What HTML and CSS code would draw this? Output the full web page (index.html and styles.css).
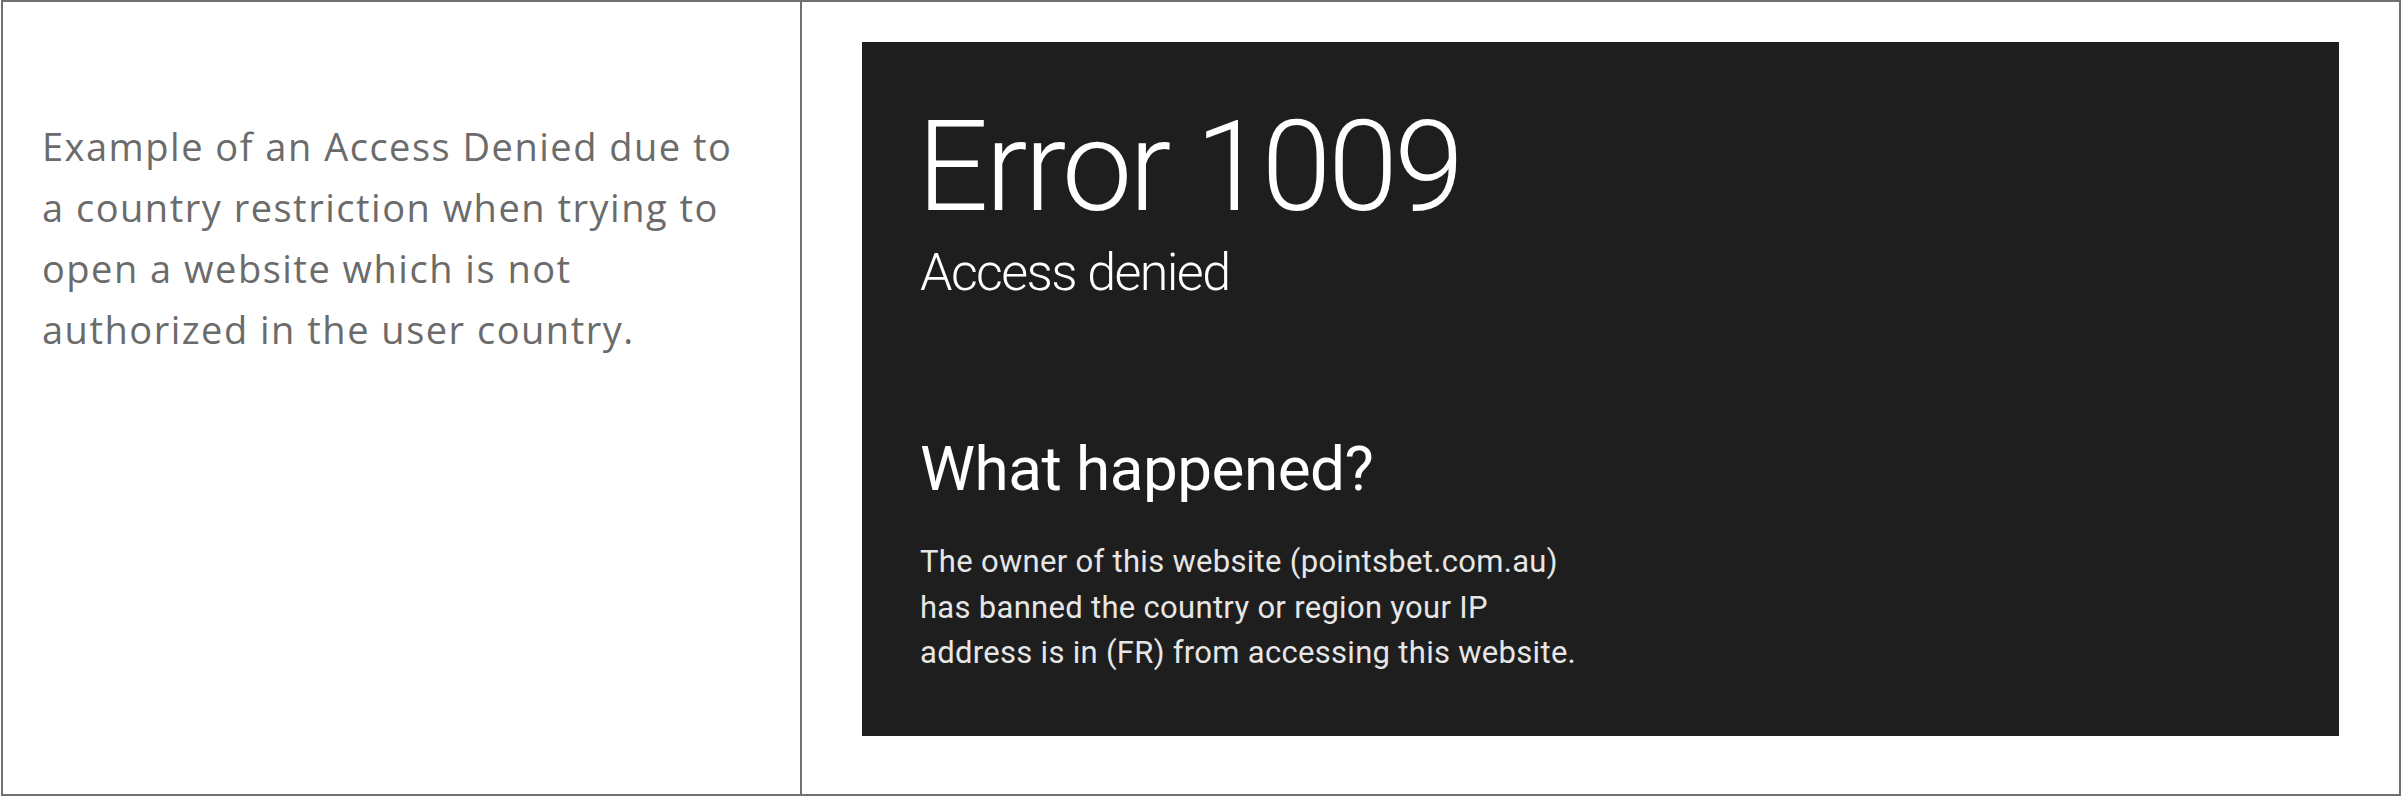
FILE: index.html
```html
<!DOCTYPE html>
<html lang="en">
<head>
<meta charset="utf-8">
<title>Access Denied example</title>
<link rel="stylesheet" href="styles.css">
</head>
<body>
<div class="table">
  <div class="cell cell-text">
    <p class="caption">Example of an Access Denied due to<br>a country restriction when trying to<br>open a website which is not<br>authorized in the user country.</p>
  </div>
  <div class="cell cell-media">
    <div class="shot">
      <h1 class="err-code">Error 1009</h1>
      <div class="err-sub">Access denied</div>
      <h2 class="err-what">What happened?</h2>
      <p class="err-desc">The owner of this website (pointsbet.com.au)<br>has banned the country or region your IP<br>address is in (FR) from accessing this website.</p>
    </div>
  </div>
</div>
</body>
</html>
```
FILE: styles.css
```css
html, body {
  margin: 0;
  padding: 0;
  background: #ffffff;
}
body {
  padding-left: 1px;
}
.table {
  width: 2400px;
  height: 796px;
  box-sizing: border-box;
  border: 2px solid #707070;
  display: grid;
  grid-template-columns: 799px 1fr;
}
.cell-text {
  border-right: 2px solid #707070;
  padding: 114px 0 0 39px;
}
.caption {
  margin: 0;
  font-family: "Open Sans", "Liberation Sans", sans-serif;
  font-size: 38px;
  line-height: 61px;
  letter-spacing: 1.5px;
  color: #6b6b6b;
}
.cell-media {
  padding: 40px 60px 58px 60px;
}
.shot {
  background: #1e1e1e;
  height: 694px;
  box-sizing: border-box;
  padding: 62px 0 0 58px;
  font-family: Roboto, "Liberation Sans", sans-serif;
  color: #ffffff;
}
.err-code {
  margin: 0;
  font-size: 126px;
  line-height: 1;
  font-weight: 300;
  letter-spacing: -3.5px;
  margin-left: -3px;
}
.err-sub {
  margin-top: 17px;
  font-size: 52px;
  line-height: 1;
  font-weight: 300;
  letter-spacing: -1.6px;
}
.err-what {
  margin: 139px 0 0;
  font-size: 62px;
  line-height: 1;
  font-weight: 400;
  letter-spacing: -0.5px;
}
.err-desc {
  margin: 39px 0 0;
  font-size: 31px;
  line-height: 45.5px;
  color: #e6e6e6;
  letter-spacing: 0.3px;
}
```
